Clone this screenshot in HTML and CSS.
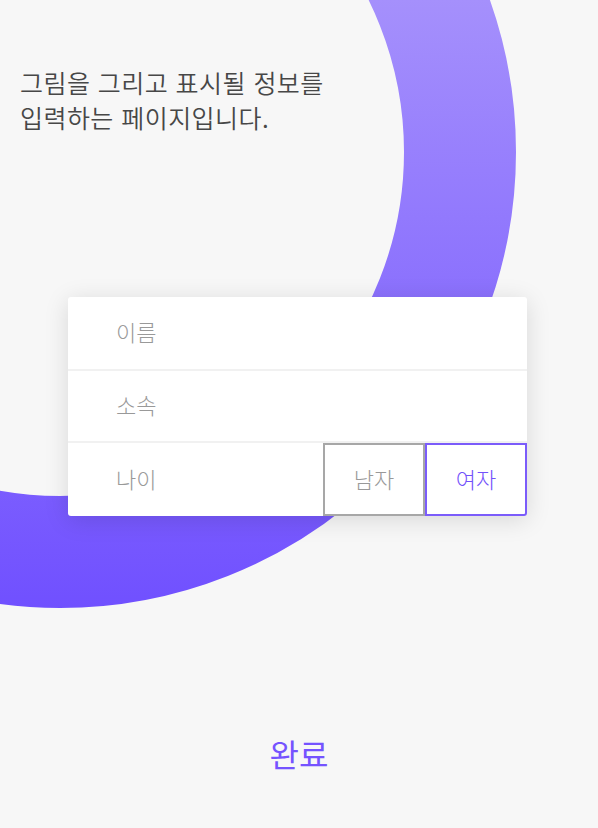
FILE: index.html
```html
<!DOCTYPE html>
<html lang="ko">
<head>
<meta charset="utf-8">
<link rel="stylesheet" href="styles.css">
</head>
<body>
<div class="page">
  <svg class="ring" width="598" height="828" viewBox="0 0 598 828" aria-hidden="true">
    <defs>
      <linearGradient id="rg" x1="0" y1="-250" x2="0" y2="608" gradientUnits="userSpaceOnUse">
        <stop offset="0" stop-color="#b4a2fd"/>
        <stop offset="0.29" stop-color="#a590fc"/>
        <stop offset="1" stop-color="#7050ff"/>
      </linearGradient>
    </defs>
    <circle cx="60" cy="152" r="400" fill="none" stroke="url(#rg)" stroke-width="112"/>
  </svg>
  <p class="intro">그림을 그리고 표시될 정보를<br>입력하는 페이지입니다.</p>
  <div class="card">
    <div class="row row-name">이름</div>
    <div class="row row-org">소속</div>
    <div class="row row-last">
      <span class="age">나이</span>
      <button class="gender">남자</button>
      <button class="gender active">여자</button>
    </div>
  </div>
  <div class="done">완료</div>
</div>
</body>
</html>
```

FILE: styles.css
```css
html, body {
  margin: 0;
  padding: 0;
  background: #f7f7f7;
}
body {
  font-family: "Noto Sans CJK KR", "Noto Sans", sans-serif;
}
.page {
  position: relative;
  width: 598px;
  height: 828px;
  overflow: hidden;
}
.ring {
  position: absolute;
  left: 0;
  top: 0;
}
.intro {
  position: relative;
  margin: 0;
  padding: 65px 0 0 20px;
  font-size: 25px;
  line-height: 35px;
  font-weight: 350;
  color: #474747;
  letter-spacing: 0.45px;
}
.card {
  position: relative;
  margin: 162px 0 0 68px;
  width: 459px;
  background: #fff;
  border-radius: 3px;
  box-shadow: 0 4px 24px rgba(0, 0, 0, 0.13);
  display: flex;
  flex-direction: column;
}
.row {
  box-sizing: border-box;
  display: flex;
  align-items: center;
  padding: 0 0 4px 48px;
  font-size: 22px;
  font-weight: 300;
  color: #999999;
  border-bottom: 2px solid #f1f1f1;
}
.row-name {
  height: 74px;
}
.row-org {
  height: 72px;
}
.row-last {
  border-bottom: none;
  height: 73px;
  padding: 0;
}
.age {
  flex: 1;
  padding: 0 0 4px 48px;
}
.gender {
  width: 102px;
  height: 73px;
  box-sizing: border-box;
  border: 2px solid #a7a7a7;
  background: #fff;
  font-family: inherit;
  font-size: 22px;
  font-weight: 300;
  color: #999999;
  padding: 0 0 4px;
  margin: 0;
}
.gender.active {
  border-color: #7b5cfa;
  color: #7352fb;
  border-bottom-right-radius: 3px;
}
.done {
  position: relative;
  margin-top: 214px;
  text-align: center;
  font-size: 32px;
  color: #7553ff;
}
```
